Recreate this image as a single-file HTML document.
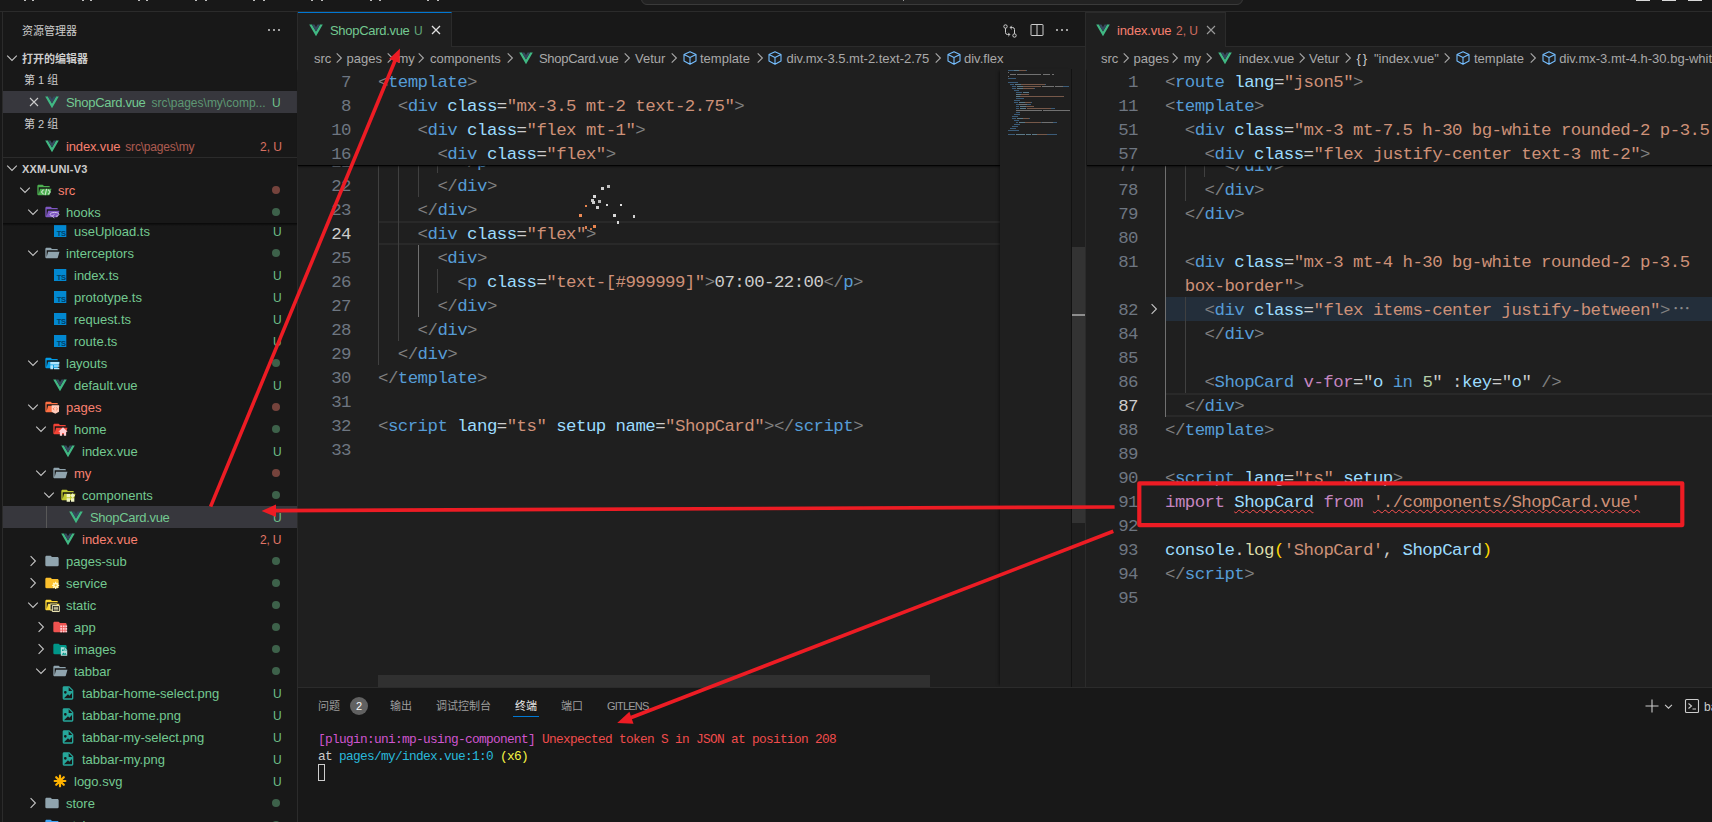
<!DOCTYPE html>
<html lang="zh-CN"><head><meta charset="utf-8"><title>VS Code</title><style>
*{box-sizing:border-box;margin:0;padding:0}
html,body{width:1712px;height:822px;overflow:hidden;background:#181818}
body{position:relative;font-family:"Liberation Sans","Noto Sans CJK SC",sans-serif;font-size:13px;color:#cccccc;-webkit-font-smoothing:antialiased}
.abs{position:absolute}
.t{position:absolute;white-space:pre;line-height:22px;height:22px;margin-top:1px}
.row{position:absolute;left:3px;width:294px;height:22px}
.code{position:absolute;white-space:pre;font-family:"Liberation Mono","Noto Sans CJK SC",monospace;font-size:17.4px;line-height:24px;height:24px;color:#cccccc;letter-spacing:-.54px;margin-top:2px}
.ln{position:absolute;font-family:"Liberation Mono","Noto Sans CJK SC",monospace;font-size:17.4px;letter-spacing:-.54px;line-height:24px;height:24px;text-align:right;color:#6e7681;width:60px;margin-top:2px}
.ln.act{color:#cccccc}
.b{color:#808080}.tg{color:#569cd6}.at{color:#9cdcfe}.s{color:#ce9178}.k{color:#c586c0}.c{color:#4ec9b0}.y{color:#ffd700}.f{color:#dcdcaa}.n{color:#b5cea8}.w{color:#cccccc}
.guide{position:absolute;width:1px;background:#404040}
.bc{position:absolute;top:48px;height:22px;line-height:22px;white-space:pre;font-size:13px;color:#a9a9a9}
.term{position:absolute;white-space:pre;font-family:"Liberation Mono","Noto Sans CJK SC",monospace;font-size:12.8px;letter-spacing:-.68px;line-height:17px;height:17px;color:#cccccc;margin-top:1px}
.ptab{position:absolute;top:695px;height:22px;line-height:22px;font-size:11px;color:#9d9d9d;white-space:pre}

.sq{text-decoration:underline wavy #ff5252;text-decoration-thickness:1px;text-underline-offset:2.2px;text-decoration-skip-ink:none}
</style></head><body>
<div class="abs" style="left:0;top:0;width:1712px;height:12px;background:#181818;border-bottom:1px solid #2b2b2b"></div>
<div class="abs" style="left:641px;top:-20px;width:602px;height:25px;border:1px solid #3a3a3a;border-radius:6px;background:#222222"></div>
<div class="abs" style="left:24px;top:0;width:2px;height:1px;background:#bdbdbd"></div>
<div class="abs" style="left:32px;top:0;width:2px;height:1px;background:#bdbdbd"></div>
<div class="abs" style="left:82px;top:0;width:2px;height:1px;background:#bdbdbd"></div>
<div class="abs" style="left:90px;top:0;width:2px;height:1px;background:#bdbdbd"></div>
<div class="abs" style="left:138px;top:0;width:2px;height:1px;background:#bdbdbd"></div>
<div class="abs" style="left:146px;top:0;width:2px;height:1px;background:#bdbdbd"></div>
<div class="abs" style="left:195px;top:0;width:2px;height:1px;background:#bdbdbd"></div>
<div class="abs" style="left:205px;top:0;width:2px;height:1px;background:#bdbdbd"></div>
<div class="abs" style="left:253px;top:0;width:2px;height:1px;background:#bdbdbd"></div>
<div class="abs" style="left:263px;top:0;width:2px;height:1px;background:#bdbdbd"></div>
<div class="abs" style="left:311px;top:0;width:2px;height:1px;background:#bdbdbd"></div>
<div class="abs" style="left:321px;top:0;width:2px;height:1px;background:#bdbdbd"></div>
<div class="abs" style="left:370px;top:0;width:2px;height:1px;background:#bdbdbd"></div>
<div class="abs" style="left:379px;top:0;width:2px;height:1px;background:#bdbdbd"></div>
<div class="abs" style="left:427px;top:0;width:2px;height:1px;background:#bdbdbd"></div>
<div class="abs" style="left:437px;top:0;width:2px;height:1px;background:#bdbdbd"></div>
<div class="abs" style="left:903px;top:0;width:1px;height:1px;background:#999"></div>
<div class="abs" style="left:1636px;top:0;width:14px;height:1px;background:#d8d8d8"></div>
<div class="abs" style="left:1662px;top:0;width:14px;height:1px;background:#d8d8d8"></div>
<div class="abs" style="left:1688px;top:0;width:14px;height:1px;background:#d8d8d8"></div>
<div class="abs" style="left:0;top:12px;width:298px;height:810px;background:#181818;border-left:1px solid #2b2b2b;border-right:1px solid #2b2b2b;margin-left:2px;width:296px"></div>
<div class="t" style="left:22px;top:19px;font-size:11px;color:#cccccc">资源管理器</div>
<div class="abs" style="left:268px;top:29px;width:2px;height:2px;background:#ccc;box-shadow:5px 0 #ccc,10px 0 #ccc;border-radius:1px"></div>
<svg class="abs" style="left:4px;top:50px" width="16" height="16" viewBox="0 0 16 16"><path d="M3.200 5.600 8 10.400l4.800-4.800" fill="none" stroke="#c5c5c5" stroke-width="1.100"/></svg>
<div class="t" style="left:22px;top:47px;font-size:11px;font-weight:700;color:#cccccc">打开的编辑器</div>
<div class="t" style="left:24px;top:69px;margin-top:0;font-size:11px;color:#cccccc">第 1 组</div>
<div class="abs" style="left:3px;top:91px;width:294px;height:22px;background:#37373d"></div>
<svg class="abs" style="left:26px;top:94px" width="16" height="16" viewBox="0 0 16 16"><path d="M4 4l8 8M12 4l-8 8" stroke="#cccccc" stroke-width="1.100" fill="none"/></svg>
<svg class="abs" style="left:44px;top:94px" width="16" height="16" viewBox="0 0 24 24"><path d="M1.800 3.700 12 21.300 22.200 3.700h-4.100L12 14.300 5.800 3.700z" fill="#41b883"/><path d="M5.800 3.700 12 14.300l6.100-10.600h-3.700L12 7.800 9.600 3.700z" fill="#35495e"/></svg>
<div class="t" style="left:66px;top:91px;color:#73c991"><span style="letter-spacing:-.3px">ShopCard.vue</span><span style="font-size:12px;opacity:.65;margin-left:6px">src\pages\my\comp...</span></div>
<div class="t" style="left:272px;top:91px;color:#73c991;font-size:12px;opacity:.95">U</div>
<div class="t" style="left:24px;top:113px;margin-top:0;font-size:11px;color:#cccccc">第 2 组</div>
<svg class="abs" style="left:44px;top:138px" width="16" height="16" viewBox="0 0 24 24"><path d="M1.800 3.700 12 21.300 22.200 3.700h-4.100L12 14.300 5.800 3.700z" fill="#41b883"/><path d="M5.800 3.700 12 14.300l6.100-10.600h-3.700L12 7.800 9.600 3.700z" fill="#35495e"/></svg>
<div class="t" style="left:66px;top:135px;color:#f88070"><span style="letter-spacing:-.15px">index.vue</span><span style="font-size:12px;opacity:.65;margin-left:5px;letter-spacing:-.2px">src\pages\my</span></div>
<div class="t" style="left:260px;top:135px;color:#f88070;font-size:12px;opacity:.85">2, U</div>
<div class="abs" style="left:3px;top:157px;width:294px;height:1px;background:#2b2b2b"></div>
<svg class="abs" style="left:4px;top:160px" width="16" height="16" viewBox="0 0 16 16"><path d="M3.200 5.600 8 10.400l4.800-4.800" fill="none" stroke="#c5c5c5" stroke-width="1.100"/></svg>
<div class="t" style="left:22px;top:157px;font-size:11px;font-weight:700;letter-spacing:.2px;color:#cccccc">XXM-UNI-V3</div>
<div class="abs" style="left:0;top:223px;width:297px;height:599px;overflow:hidden"><div class="abs" style="left:0;top:-223px;width:297px;height:822px">
<svg class="abs" style="left:52px;top:223px" width="16" height="16" viewBox="0 0 16 16"><rect x="2" y="2" width="12.300" height="12" fill="#0288d1"/><text x="13.600" y="13" font-size="7.600" font-weight="700" font-family="Liberation Sans, sans-serif" fill="#013f66" text-anchor="end" letter-spacing="-.4">TS</text></svg><div class="t" style="left:74px;top:220px;color:#73c991">useUpload.ts</div><div class="t" style="left:273px;top:220px;color:#73c991;font-size:12px;opacity:.95">U</div>
<svg class="abs" style="left:25px;top:245px" width="16" height="16" viewBox="0 0 16 16"><path d="M3.200 5.600 8 10.400l4.800-4.800" fill="none" stroke="#c5c5c5" stroke-width="1.100"/></svg><svg class="abs" style="left:44px;top:245px" width="16" height="16" viewBox="0 0 24 24"><path d="M19 20H4c-1.100 0-2-.9-2-2V6c0-1.100.9-2 2-2h6l2 2h7a2 2 0 0 1 2 2H4v10l2.100-8h17.100l-2.300 8.500c-.2.900-1 1.500-1.900 1.500z" fill="#90a4ae"/></svg><div class="t" style="left:66px;top:242px;color:#73c991">interceptors</div><div class="abs" style="left:272px;top:249px;width:8px;height:8px;border-radius:4px;background:#73c991;opacity:.42"></div>
<svg class="abs" style="left:52px;top:267px" width="16" height="16" viewBox="0 0 16 16"><rect x="2" y="2" width="12.300" height="12" fill="#0288d1"/><text x="13.600" y="13" font-size="7.600" font-weight="700" font-family="Liberation Sans, sans-serif" fill="#013f66" text-anchor="end" letter-spacing="-.4">TS</text></svg><div class="t" style="left:74px;top:264px;color:#73c991">index.ts</div><div class="t" style="left:273px;top:264px;color:#73c991;font-size:12px;opacity:.95">U</div>
<svg class="abs" style="left:52px;top:289px" width="16" height="16" viewBox="0 0 16 16"><rect x="2" y="2" width="12.300" height="12" fill="#0288d1"/><text x="13.600" y="13" font-size="7.600" font-weight="700" font-family="Liberation Sans, sans-serif" fill="#013f66" text-anchor="end" letter-spacing="-.4">TS</text></svg><div class="t" style="left:74px;top:286px;color:#73c991">prototype.ts</div><div class="t" style="left:273px;top:286px;color:#73c991;font-size:12px;opacity:.95">U</div>
<svg class="abs" style="left:52px;top:311px" width="16" height="16" viewBox="0 0 16 16"><rect x="2" y="2" width="12.300" height="12" fill="#0288d1"/><text x="13.600" y="13" font-size="7.600" font-weight="700" font-family="Liberation Sans, sans-serif" fill="#013f66" text-anchor="end" letter-spacing="-.4">TS</text></svg><div class="t" style="left:74px;top:308px;color:#73c991">request.ts</div><div class="t" style="left:273px;top:308px;color:#73c991;font-size:12px;opacity:.95">U</div>
<svg class="abs" style="left:52px;top:333px" width="16" height="16" viewBox="0 0 16 16"><rect x="2" y="2" width="12.300" height="12" fill="#0288d1"/><text x="13.600" y="13" font-size="7.600" font-weight="700" font-family="Liberation Sans, sans-serif" fill="#013f66" text-anchor="end" letter-spacing="-.4">TS</text></svg><div class="t" style="left:74px;top:330px;color:#73c991">route.ts</div><div class="t" style="left:273px;top:330px;color:#73c991;font-size:12px;opacity:.95">U</div>
<svg class="abs" style="left:25px;top:355px" width="16" height="16" viewBox="0 0 16 16"><path d="M3.200 5.600 8 10.400l4.800-4.800" fill="none" stroke="#c5c5c5" stroke-width="1.100"/></svg><svg class="abs" style="left:44px;top:355px" width="16" height="16" viewBox="0 0 24 24"><path d="M19 20H4c-1.100 0-2-.9-2-2V6c0-1.100.9-2 2-2h6l2 2h7a2 2 0 0 1 2 2H4v10l2.100-8h17.100l-2.300 8.500c-.2.900-1 1.500-1.900 1.500z" fill="#039be5"/><path d="M9.500 10.500h13.500v3.600H9.500zM9.500 15.400h4v6h-4zM14.800 15.400h8.200v2.400h-8.200zM14.800 19h8.200v2.400h-8.200z" fill="#b3e5fc"/></svg><div class="t" style="left:66px;top:352px;color:#73c991">layouts</div><div class="abs" style="left:272px;top:359px;width:8px;height:8px;border-radius:4px;background:#73c991;opacity:.42"></div>
<svg class="abs" style="left:52px;top:377px" width="16" height="16" viewBox="0 0 24 24"><path d="M1.800 3.700 12 21.300 22.200 3.700h-4.100L12 14.300 5.800 3.700z" fill="#41b883"/><path d="M5.800 3.700 12 14.300l6.100-10.600h-3.700L12 7.800 9.600 3.700z" fill="#35495e"/></svg><div class="t" style="left:74px;top:374px;color:#73c991">default.vue</div><div class="t" style="left:273px;top:374px;color:#73c991;font-size:12px;opacity:.95">U</div>
<svg class="abs" style="left:25px;top:399px" width="16" height="16" viewBox="0 0 16 16"><path d="M3.200 5.600 8 10.400l4.800-4.800" fill="none" stroke="#c5c5c5" stroke-width="1.100"/></svg><svg class="abs" style="left:44px;top:399px" width="16" height="16" viewBox="0 0 24 24"><path d="M19 20H4c-1.100 0-2-.9-2-2V6c0-1.100.9-2 2-2h6l2 2h7a2 2 0 0 1 2 2H4v10l2.100-8h17.100l-2.300 8.500c-.2.900-1 1.500-1.900 1.500z" fill="#ff7043"/><path d="M11.500 9.500h11v9.500l-5.500 3.200-5.500-3.200z" fill="#ffccbc"/><path d="M15.700 12.800l-2 2 2 2M18.300 12.800l2 2-2 2" stroke="#ff7043" stroke-width="1.300" fill="none"/></svg><div class="t" style="left:66px;top:396px;color:#f88070">pages</div><div class="abs" style="left:272px;top:403px;width:8px;height:8px;border-radius:4px;background:#f88070;opacity:.42"></div>
<svg class="abs" style="left:33px;top:421px" width="16" height="16" viewBox="0 0 16 16"><path d="M3.200 5.600 8 10.400l4.800-4.800" fill="none" stroke="#c5c5c5" stroke-width="1.100"/></svg><svg class="abs" style="left:52px;top:421px" width="16" height="16" viewBox="0 0 24 24"><path d="M19 20H4c-1.100 0-2-.9-2-2V6c0-1.100.9-2 2-2h6l2 2h7a2 2 0 0 1 2 2H4v10l2.100-8h17.100l-2.300 8.500c-.2.900-1 1.500-1.900 1.500z" fill="#f44336"/><path d="M16.500 9.500 9.500 16h2.300v6h3.400v-4h2.600v4h3.400v-6h2.300z" fill="#ffcdd2"/></svg><div class="t" style="left:74px;top:418px;color:#73c991">home</div><div class="abs" style="left:272px;top:425px;width:8px;height:8px;border-radius:4px;background:#73c991;opacity:.42"></div>
<svg class="abs" style="left:60px;top:443px" width="16" height="16" viewBox="0 0 24 24"><path d="M1.800 3.700 12 21.300 22.200 3.700h-4.100L12 14.300 5.800 3.700z" fill="#41b883"/><path d="M5.800 3.700 12 14.300l6.100-10.600h-3.700L12 7.800 9.600 3.700z" fill="#35495e"/></svg><div class="t" style="left:82px;top:440px;color:#73c991">index.vue</div><div class="t" style="left:273px;top:440px;color:#73c991;font-size:12px;opacity:.95">U</div>
<svg class="abs" style="left:33px;top:465px" width="16" height="16" viewBox="0 0 16 16"><path d="M3.200 5.600 8 10.400l4.800-4.800" fill="none" stroke="#c5c5c5" stroke-width="1.100"/></svg><svg class="abs" style="left:52px;top:465px" width="16" height="16" viewBox="0 0 24 24"><path d="M19 20H4c-1.100 0-2-.9-2-2V6c0-1.100.9-2 2-2h6l2 2h7a2 2 0 0 1 2 2H4v10l2.100-8h17.100l-2.300 8.500c-.2.900-1 1.500-1.900 1.500z" fill="#90a4ae"/></svg><div class="t" style="left:74px;top:462px;color:#f88070">my</div><div class="abs" style="left:272px;top:469px;width:8px;height:8px;border-radius:4px;background:#f88070;opacity:.42"></div>
<svg class="abs" style="left:41px;top:487px" width="16" height="16" viewBox="0 0 16 16"><path d="M3.200 5.600 8 10.400l4.800-4.800" fill="none" stroke="#c5c5c5" stroke-width="1.100"/></svg><svg class="abs" style="left:60px;top:487px" width="16" height="16" viewBox="0 0 24 24"><path d="M19 20H4c-1.100 0-2-.9-2-2V6c0-1.100.9-2 2-2h6l2 2h7a2 2 0 0 1 2 2H4v10l2.100-8h17.100l-2.300 8.500c-.2.900-1 1.500-1.900 1.500z" fill="#c0ca33"/><path d="M10 10.500h5v5h-5zM10 17h5v5h-5zM16.500 17h5v5h-5z" fill="#f0f4c3"/><path d="M19 9.200l3.600 3.600-3.600 3.600-3.600-3.600z" fill="#f0f4c3"/></svg><div class="t" style="left:82px;top:484px;color:#73c991">components</div><div class="abs" style="left:272px;top:491px;width:8px;height:8px;border-radius:4px;background:#73c991;opacity:.42"></div>
<div class="abs" style="left:3px;top:506px;width:294px;height:22px;background:#37373d"></div>
<div class="abs" style="left:46px;top:506px;width:1px;height:22px;background:#585858"></div>
<svg class="abs" style="left:68px;top:509px" width="16" height="16" viewBox="0 0 24 24"><path d="M1.800 3.700 12 21.300 22.200 3.700h-4.100L12 14.300 5.800 3.700z" fill="#41b883"/><path d="M5.800 3.700 12 14.300l6.100-10.600h-3.700L12 7.800 9.600 3.700z" fill="#35495e"/></svg><div class="t" style="left:90px;top:506px;color:#73c991;letter-spacing:-.3px">ShopCard.vue</div><div class="t" style="left:273px;top:506px;color:#73c991;font-size:12px;opacity:.95">U</div>
<svg class="abs" style="left:60px;top:531px" width="16" height="16" viewBox="0 0 24 24"><path d="M1.800 3.700 12 21.300 22.200 3.700h-4.100L12 14.300 5.800 3.700z" fill="#41b883"/><path d="M5.800 3.700 12 14.300l6.100-10.600h-3.700L12 7.800 9.600 3.700z" fill="#35495e"/></svg><div class="t" style="left:82px;top:528px;color:#f88070">index.vue</div><div class="t" style="left:260px;top:528px;color:#f88070;font-size:12px;opacity:.9;letter-spacing:-.2px">2, U</div>
<svg class="abs" style="left:25px;top:553px" width="16" height="16" viewBox="0 0 16 16"><path d="M5.600 3.200 10.400 8l-4.800 4.800" fill="none" stroke="#c5c5c5" stroke-width="1.100"/></svg><svg class="abs" style="left:44px;top:553px" width="16" height="16" viewBox="0 0 24 24"><path d="M10 4H4c-1.100 0-2 .9-2 2v12a2 2 0 0 0 2 2h16a2 2 0 0 0 2-2V8c0-1.100-.9-2-2-2h-8l-2-2z" fill="#90a4ae"/></svg><div class="t" style="left:66px;top:550px;color:#73c991">pages-sub</div><div class="abs" style="left:272px;top:557px;width:8px;height:8px;border-radius:4px;background:#73c991;opacity:.42"></div>
<svg class="abs" style="left:25px;top:575px" width="16" height="16" viewBox="0 0 16 16"><path d="M5.600 3.200 10.400 8l-4.800 4.800" fill="none" stroke="#c5c5c5" stroke-width="1.100"/></svg><svg class="abs" style="left:44px;top:575px" width="16" height="16" viewBox="0 0 24 24"><path d="M10 4H4c-1.100 0-2 .9-2 2v12a2 2 0 0 0 2 2h16a2 2 0 0 0 2-2V8c0-1.100-.9-2-2-2h-8l-2-2z" fill="#fbc02d"/><path d="M22.82 14.57L22.82 16.43L21.31 16.35L20.79 17.59L21.92 18.61L20.61 19.92L19.59 18.79L18.35 19.31L18.43 20.82L16.57 20.82L16.65 19.31L15.41 18.79L14.39 19.92L13.08 18.61L14.21 17.59L13.69 16.35L12.18 16.43L12.18 14.57L13.69 14.65L14.21 13.41L13.08 12.39L14.39 11.08L15.41 12.21L16.65 11.69L16.57 10.18L18.43 10.18L18.35 11.69L19.59 12.21L20.61 11.08L21.92 12.39L20.79 13.41L21.31 14.65z" fill="#fff9c4"/><circle cx="17.500" cy="15.500" r="1.700" fill="#fbc02d"/></svg><div class="t" style="left:66px;top:572px;color:#73c991">service</div><div class="abs" style="left:272px;top:579px;width:8px;height:8px;border-radius:4px;background:#73c991;opacity:.42"></div>
<svg class="abs" style="left:25px;top:597px" width="16" height="16" viewBox="0 0 16 16"><path d="M3.200 5.600 8 10.400l4.800-4.800" fill="none" stroke="#c5c5c5" stroke-width="1.100"/></svg><svg class="abs" style="left:44px;top:597px" width="16" height="16" viewBox="0 0 24 24"><path d="M19 20H4c-1.100 0-2-.9-2-2V6c0-1.100.9-2 2-2h6l2 2h7a2 2 0 0 1 2 2H4v10l2.100-8h17.100l-2.300 8.500c-.2.900-1 1.500-1.900 1.500z" fill="#fdd835"/><path d="M9.200 10.500h10.500v9H9.200z" fill="#181818" stroke="#fff59d" stroke-width="1.300"/><path d="M12.500 12.800h10.500v9H12.500z" fill="#181818" stroke="#fff9c4" stroke-width="1.400"/><path d="M14.500 15.400h6.500M14.500 17.400h6.500M14.500 19.400h6.500" stroke="#fff9c4" stroke-width="1.200"/></svg><div class="t" style="left:66px;top:594px;color:#73c991">static</div><div class="abs" style="left:272px;top:601px;width:8px;height:8px;border-radius:4px;background:#73c991;opacity:.42"></div>
<svg class="abs" style="left:33px;top:619px" width="16" height="16" viewBox="0 0 16 16"><path d="M5.600 3.200 10.400 8l-4.800 4.800" fill="none" stroke="#c5c5c5" stroke-width="1.100"/></svg><svg class="abs" style="left:52px;top:619px" width="16" height="16" viewBox="0 0 24 24"><path d="M10 4H4c-1.100 0-2 .9-2 2v12a2 2 0 0 0 2 2h16a2 2 0 0 0 2-2V8c0-1.100-.9-2-2-2h-8l-2-2z" fill="#ef5350"/><g fill="#ffcdd2"><rect x="12.4" y="9.7" width="2.700" height="2.700"/><rect x="12.4" y="13.5" width="2.700" height="2.700"/><rect x="12.4" y="17.3" width="2.700" height="2.700"/><rect x="16.2" y="9.7" width="2.700" height="2.700"/><rect x="16.2" y="13.5" width="2.700" height="2.700"/><rect x="16.2" y="17.3" width="2.700" height="2.700"/><rect x="20.0" y="9.7" width="2.700" height="2.700"/><rect x="20.0" y="13.5" width="2.700" height="2.700"/><rect x="20.0" y="17.3" width="2.700" height="2.700"/></g></svg><div class="t" style="left:74px;top:616px;color:#73c991">app</div><div class="abs" style="left:272px;top:623px;width:8px;height:8px;border-radius:4px;background:#73c991;opacity:.42"></div>
<svg class="abs" style="left:33px;top:641px" width="16" height="16" viewBox="0 0 16 16"><path d="M5.600 3.200 10.400 8l-4.800 4.800" fill="none" stroke="#c5c5c5" stroke-width="1.100"/></svg><svg class="abs" style="left:52px;top:641px" width="16" height="16" viewBox="0 0 24 24"><path d="M10 4H4c-1.100 0-2 .9-2 2v12a2 2 0 0 0 2 2h16a2 2 0 0 0 2-2V8c0-1.100-.9-2-2-2h-8l-2-2z" fill="#009688"/><path d="M13.200 9.500h5.600l4 4v8.700h-9.600z" fill="#b2dfdb"/><path d="M14.500 20.500l2.700-3.400 1.600 2 1.200-1.300 2 2.700z" fill="#009688"/><circle cx="16.300" cy="13.800" r="1.300" fill="#009688"/><path d="M18.600 9.700v4.100h4" fill="none" stroke="#009688" stroke-width=".9"/></svg><div class="t" style="left:74px;top:638px;color:#73c991">images</div><div class="abs" style="left:272px;top:645px;width:8px;height:8px;border-radius:4px;background:#73c991;opacity:.42"></div>
<svg class="abs" style="left:33px;top:663px" width="16" height="16" viewBox="0 0 16 16"><path d="M3.200 5.600 8 10.400l4.800-4.800" fill="none" stroke="#c5c5c5" stroke-width="1.100"/></svg><svg class="abs" style="left:52px;top:663px" width="16" height="16" viewBox="0 0 24 24"><path d="M19 20H4c-1.100 0-2-.9-2-2V6c0-1.100.9-2 2-2h6l2 2h7a2 2 0 0 1 2 2H4v10l2.100-8h17.100l-2.300 8.500c-.2.900-1 1.500-1.900 1.500z" fill="#90a4ae"/></svg><div class="t" style="left:74px;top:660px;color:#73c991">tabbar</div><div class="abs" style="left:272px;top:667px;width:8px;height:8px;border-radius:4px;background:#73c991;opacity:.42"></div>
<svg class="abs" style="left:60px;top:685px" width="16" height="16" viewBox="0 0 24 24"><path d="M13 9h5.500L13 3.500V9M6 2h8l6 6v12a2 2 0 0 1-2 2H6a2 2 0 0 1-2-2V4c0-1.100.9-2 2-2m0 18h12v-8l-4 4-2-2-6 6M8 9a2 2 0 0 0-2 2 2 2 0 0 0 2 2 2 2 0 0 0 2-2 2 2 0 0 0-2-2z" fill="#26a69a"/></svg><div class="t" style="left:82px;top:682px;color:#73c991">tabbar-home-select.png</div><div class="t" style="left:273px;top:682px;color:#73c991;font-size:12px;opacity:.95">U</div>
<svg class="abs" style="left:60px;top:707px" width="16" height="16" viewBox="0 0 24 24"><path d="M13 9h5.500L13 3.500V9M6 2h8l6 6v12a2 2 0 0 1-2 2H6a2 2 0 0 1-2-2V4c0-1.100.9-2 2-2m0 18h12v-8l-4 4-2-2-6 6M8 9a2 2 0 0 0-2 2 2 2 0 0 0 2 2 2 2 0 0 0 2-2 2 2 0 0 0-2-2z" fill="#26a69a"/></svg><div class="t" style="left:82px;top:704px;color:#73c991">tabbar-home.png</div><div class="t" style="left:273px;top:704px;color:#73c991;font-size:12px;opacity:.95">U</div>
<svg class="abs" style="left:60px;top:729px" width="16" height="16" viewBox="0 0 24 24"><path d="M13 9h5.500L13 3.500V9M6 2h8l6 6v12a2 2 0 0 1-2 2H6a2 2 0 0 1-2-2V4c0-1.100.9-2 2-2m0 18h12v-8l-4 4-2-2-6 6M8 9a2 2 0 0 0-2 2 2 2 0 0 0 2 2 2 2 0 0 0 2-2 2 2 0 0 0-2-2z" fill="#26a69a"/></svg><div class="t" style="left:82px;top:726px;color:#73c991">tabbar-my-select.png</div><div class="t" style="left:273px;top:726px;color:#73c991;font-size:12px;opacity:.95">U</div>
<svg class="abs" style="left:60px;top:751px" width="16" height="16" viewBox="0 0 24 24"><path d="M13 9h5.500L13 3.500V9M6 2h8l6 6v12a2 2 0 0 1-2 2H6a2 2 0 0 1-2-2V4c0-1.100.9-2 2-2m0 18h12v-8l-4 4-2-2-6 6M8 9a2 2 0 0 0-2 2 2 2 0 0 0 2 2 2 2 0 0 0 2-2 2 2 0 0 0-2-2z" fill="#26a69a"/></svg><div class="t" style="left:82px;top:748px;color:#73c991">tabbar-my.png</div><div class="t" style="left:273px;top:748px;color:#73c991;font-size:12px;opacity:.95">U</div>
<svg class="abs" style="left:52px;top:773px" width="16" height="16" viewBox="0 0 24 24"><g stroke="#ffb300" stroke-width="3.300" stroke-linecap="round"><path d="M12 4v16M4 12h16M6.300 6.300l11.400 11.400M17.700 6.300 6.300 17.700"/></g></svg><div class="t" style="left:74px;top:770px;color:#73c991">logo.svg</div><div class="t" style="left:273px;top:770px;color:#73c991;font-size:12px;opacity:.95">U</div>
<svg class="abs" style="left:25px;top:795px" width="16" height="16" viewBox="0 0 16 16"><path d="M5.600 3.200 10.400 8l-4.800 4.800" fill="none" stroke="#c5c5c5" stroke-width="1.100"/></svg><svg class="abs" style="left:44px;top:795px" width="16" height="16" viewBox="0 0 24 24"><path d="M10 4H4c-1.100 0-2 .9-2 2v12a2 2 0 0 0 2 2h16a2 2 0 0 0 2-2V8c0-1.100-.9-2-2-2h-8l-2-2z" fill="#90a4ae"/></svg><div class="t" style="left:66px;top:792px;color:#73c991">store</div><div class="abs" style="left:272px;top:799px;width:8px;height:8px;border-radius:4px;background:#73c991;opacity:.42"></div>
<svg class="abs" style="left:25px;top:817px" width="16" height="16" viewBox="0 0 16 16"><path d="M3.200 5.600 8 10.400l4.800-4.800" fill="none" stroke="#c5c5c5" stroke-width="1.100"/></svg><svg class="abs" style="left:44px;top:817px" width="16" height="16" viewBox="0 0 24 24"><path d="M10 4H4c-1.100 0-2 .9-2 2v12a2 2 0 0 0 2 2h16a2 2 0 0 0 2-2V8c0-1.100-.9-2-2-2h-8l-2-2z" fill="#42a5f5"/></svg><div class="t" style="left:66px;top:814px;color:#73c991">style</div><div class="abs" style="left:272px;top:821px;width:8px;height:8px;border-radius:4px;background:#73c991;opacity:.42"></div>
</div></div>
<svg class="abs" style="left:17px;top:182px" width="16" height="16" viewBox="0 0 16 16"><path d="M3.200 5.600 8 10.400l4.800-4.800" fill="none" stroke="#c5c5c5" stroke-width="1.100"/></svg><svg class="abs" style="left:36px;top:182px" width="16" height="16" viewBox="0 0 24 24"><path d="M19 20H4c-1.100 0-2-.9-2-2V6c0-1.100.9-2 2-2h6l2 2h7a2 2 0 0 1 2 2H4v10l2.100-8h17.100l-2.300 8.500c-.2.900-1 1.500-1.900 1.500z" fill="#4caf50"/><path d="M11.300 11.500 8.300 15l3 3.500M18.200 11.500l3 3.500-3 3.500M15.900 10.300l-2.300 9.400" stroke="#c8e6c9" stroke-width="1.700" fill="none"/></svg><div class="t" style="left:58px;top:179px;color:#f88070">src</div><div class="abs" style="left:272px;top:186px;width:8px;height:8px;border-radius:4px;background:#f88070;opacity:.42"></div>
<svg class="abs" style="left:25px;top:204px" width="16" height="16" viewBox="0 0 16 16"><path d="M3.200 5.600 8 10.400l4.800-4.800" fill="none" stroke="#c5c5c5" stroke-width="1.100"/></svg><svg class="abs" style="left:44px;top:204px" width="16" height="16" viewBox="0 0 24 24"><path d="M19 20H4c-1.100 0-2-.9-2-2V6c0-1.100.9-2 2-2h6l2 2h7a2 2 0 0 1 2 2H4v10l2.100-8h17.100l-2.300 8.500c-.2.900-1 1.500-1.900 1.500z" fill="#7e57c2"/><path d="M13 18.300c-2.600-.4-3.800-1.500-3.800-2.700 0-1.700 2.900-3 6.600-3s6.600 1.300 6.600 3c0 1.300-1.900 2.500-4.600 2.900" stroke="#d1c4e9" stroke-width="1.500" fill="none"/><path d="M15.300 15.600 12.600 18.300l2.800 2.500" stroke="#d1c4e9" stroke-width="1.500" fill="none"/></svg><div class="t" style="left:66px;top:201px;color:#73c991">hooks</div><div class="abs" style="left:272px;top:208px;width:8px;height:8px;border-radius:4px;background:#73c991;opacity:.42"></div>
<div class="abs" style="left:3px;top:223px;width:294px;height:3px;background:linear-gradient(#000000aa,#00000000)"></div>
<div class="abs" style="left:298px;top:12px;width:788px;height:35px;background:#181818;border-bottom:1px solid #2b2b2b"></div>
<div class="abs" style="left:298px;top:47px;width:788px;height:640px;background:#1f1f1f"></div>
<div class="abs" style="left:1085px;top:12px;width:1px;height:675px;background:#2b2b2b"></div>
<div class="abs" style="left:1086px;top:12px;width:626px;height:35px;background:#181818;border-bottom:1px solid #2b2b2b"></div>
<div class="abs" style="left:1086px;top:47px;width:626px;height:640px;background:#1f1f1f"></div>
<div class="abs" style="left:298px;top:12px;width:154px;height:35px;background:#1f1f1f;border-top:1px solid #0078d4;border-right:1px solid #2b2b2b"></div>
<svg class="abs" style="left:308px;top:22px" width="16" height="16" viewBox="0 0 24 24"><path d="M1.800 3.700 12 21.300 22.200 3.700h-4.100L12 14.300 5.800 3.700z" fill="#41b883"/><path d="M5.800 3.700 12 14.300l6.100-10.600h-3.700L12 7.800 9.600 3.700z" fill="#35495e"/></svg>
<div class="t" style="left:330px;top:19px;color:#73c991;letter-spacing:-.3px">ShopCard.vue</div>
<div class="t" style="left:414px;top:19px;color:#73c991;font-size:12px;opacity:.8">U</div>
<svg class="abs" style="left:428px;top:22px" width="16" height="16" viewBox="0 0 16 16"><path d="M4 4l8 8M12 4l-8 8" stroke="#e0e0e0" stroke-width="1.300" fill="none"/></svg>
<svg class="abs" style="left:1002px;top:22.5px" width="16" height="16" viewBox="0 0 16 16" fill="none" stroke="#cccccc" stroke-width="1"><circle cx="3.500" cy="3.500" r="1.700"/><circle cx="12.500" cy="12.500" r="1.700"/><path d="M3.500 5.200v4.300a2 2 0 0 0 2 2h2.200M6.200 9.800l1.700 1.700-1.700 1.700M12.500 10.800V6.500a2 2 0 0 0-2-2H8.300M9.800 6.200 8.100 4.500l1.700-1.700"/></svg>
<svg class="abs" style="left:1029px;top:22px" width="16" height="16" viewBox="0 0 16 16" fill="none" stroke="#cccccc" stroke-width="1"><rect x="2" y="2.500" width="12" height="11" rx=".5"/><path d="M8 2.500v11"/></svg>
<div class="abs" style="left:1056px;top:29px;width:2px;height:2px;background:#ccc;box-shadow:5px 0 #ccc,10px 0 #ccc;border-radius:1px"></div>
<div class="bc" style="left:314px;">src</div>
<svg class="abs" style="left:330.5px;top:50px" width="16" height="16" viewBox="0 0 16 16"><path d="M5.700 3.300 10.400 8l-4.700 4.700" fill="none" stroke="#a9a9a9" stroke-width="1.100"/></svg>
<div class="bc" style="left:346.5px;">pages</div>
<svg class="abs" style="left:381.5px;top:50px" width="16" height="16" viewBox="0 0 16 16"><path d="M5.700 3.300 10.400 8l-4.700 4.700" fill="none" stroke="#a9a9a9" stroke-width="1.100"/></svg>
<div class="bc" style="left:397.5px;">my</div>
<svg class="abs" style="left:413px;top:50px" width="16" height="16" viewBox="0 0 16 16"><path d="M5.700 3.300 10.400 8l-4.700 4.700" fill="none" stroke="#a9a9a9" stroke-width="1.100"/></svg>
<div class="bc" style="left:430px;">components</div>
<svg class="abs" style="left:501.5px;top:50px" width="16" height="16" viewBox="0 0 16 16"><path d="M5.700 3.300 10.400 8l-4.700 4.700" fill="none" stroke="#a9a9a9" stroke-width="1.100"/></svg>
<svg class="abs" style="left:518px;top:50px" width="16" height="16" viewBox="0 0 24 24"><path d="M1.800 3.700 12 21.300 22.200 3.700h-4.100L12 14.300 5.800 3.700z" fill="#41b883"/><path d="M5.800 3.700 12 14.300l6.100-10.600h-3.700L12 7.800 9.600 3.700z" fill="#35495e"/></svg>
<div class="bc" style="left:539px;letter-spacing:-.3px">ShopCard.vue</div>
<svg class="abs" style="left:618.5px;top:50px" width="16" height="16" viewBox="0 0 16 16"><path d="M5.700 3.300 10.400 8l-4.700 4.700" fill="none" stroke="#a9a9a9" stroke-width="1.100"/></svg>
<div class="bc" style="left:635px;">Vetur</div>
<svg class="abs" style="left:665.5px;top:50px" width="16" height="16" viewBox="0 0 16 16"><path d="M5.700 3.300 10.400 8l-4.700 4.700" fill="none" stroke="#a9a9a9" stroke-width="1.100"/></svg>
<svg class="abs" style="left:681.5px;top:50px" width="16" height="16" viewBox="0 0 16 16" fill="none" stroke="#75beff" stroke-width="1.100" stroke-linejoin="round"><path d="M8 1.800 14 4.500v6.600L8 14.200 2 11.100V4.500zM2 4.500l6 2.900 6-2.900M8 7.400v6.800"/></svg>
<div class="bc" style="left:700px;">template</div>
<svg class="abs" style="left:752px;top:50px" width="16" height="16" viewBox="0 0 16 16"><path d="M5.700 3.300 10.400 8l-4.700 4.700" fill="none" stroke="#a9a9a9" stroke-width="1.100"/></svg>
<svg class="abs" style="left:767px;top:50px" width="16" height="16" viewBox="0 0 16 16" fill="none" stroke="#75beff" stroke-width="1.100" stroke-linejoin="round"><path d="M8 1.800 14 4.500v6.600L8 14.200 2 11.100V4.500zM2 4.500l6 2.900 6-2.900M8 7.400v6.800"/></svg>
<div class="bc" style="left:786.5px;">div.mx-3.5.mt-2.text-2.75</div>
<svg class="abs" style="left:929.5px;top:50px" width="16" height="16" viewBox="0 0 16 16"><path d="M5.700 3.300 10.400 8l-4.700 4.700" fill="none" stroke="#a9a9a9" stroke-width="1.100"/></svg>
<svg class="abs" style="left:945.5px;top:50px" width="16" height="16" viewBox="0 0 16 16" fill="none" stroke="#75beff" stroke-width="1.100" stroke-linejoin="round"><path d="M8 1.800 14 4.500v6.600L8 14.200 2 11.100V4.500zM2 4.500l6 2.900 6-2.900M8 7.400v6.800"/></svg>
<div class="bc" style="left:964px;">div.flex</div>
<div class="abs" style="left:298px;top:165px;width:788px;height:510px;overflow:hidden"><div class="abs" style="left:-298px;top:-165px;width:1712px;height:822px">
<div class="abs" style="left:378px;top:221px;width:622px;height:24px;border-top:2px solid #292929;border-bottom:2px solid #292929"></div>
<div class="guide" style="left:378px;top:149px;height:216px;background:#404040"></div>
<div class="guide" style="left:398px;top:149px;height:192px;background:#404040"></div>
<div class="guide" style="left:418px;top:149px;height:48px;background:#404040"></div>
<div class="guide" style="left:437px;top:149px;height:24px;background:#404040"></div>
<div class="guide" style="left:418px;top:245px;height:72px;background:#707070"></div>
<div class="guide" style="left:437px;top:269px;height:24px;background:#404040"></div>
<div class="ln" style="left:291px;top:149px">21</div>
<div class="code" style="left:457.2px;top:149px"><span class="b">&lt;/</span><span class="tg">p</span><span class="b">&gt;</span></div>
<div class="ln" style="left:291px;top:173px">22</div>
<div class="code" style="left:437.4px;top:173px"><span class="b">&lt;/</span><span class="tg">div</span><span class="b">&gt;</span></div>
<div class="ln" style="left:291px;top:197px">23</div>
<div class="code" style="left:417.6px;top:197px"><span class="b">&lt;/</span><span class="tg">div</span><span class="b">&gt;</span></div>
<div class="ln act" style="left:291px;top:221px">24</div>
<div class="code" style="left:417.6px;top:221px"><span class="b">&lt;</span><span class="tg">div</span> <span class="at">class</span><span class="w">=</span><span class="s">&quot;flex&quot;</span><span class="b">&gt;</span></div>
<div class="ln" style="left:291px;top:245px">25</div>
<div class="code" style="left:437.4px;top:245px"><span class="b">&lt;</span><span class="tg">div</span><span class="b">&gt;</span></div>
<div class="ln" style="left:291px;top:269px">26</div>
<div class="code" style="left:457.2px;top:269px"><span class="b">&lt;</span><span class="tg">p</span> <span class="at">class</span><span class="w">=</span><span class="s">&quot;text-[#999999]&quot;</span><span class="b">&gt;</span><span class="w">07:00-22:00</span><span class="b">&lt;/</span><span class="tg">p</span><span class="b">&gt;</span></div>
<div class="ln" style="left:291px;top:293px">27</div>
<div class="code" style="left:437.4px;top:293px"><span class="b">&lt;/</span><span class="tg">div</span><span class="b">&gt;</span></div>
<div class="ln" style="left:291px;top:317px">28</div>
<div class="code" style="left:417.6px;top:317px"><span class="b">&lt;/</span><span class="tg">div</span><span class="b">&gt;</span></div>
<div class="ln" style="left:291px;top:341px">29</div>
<div class="code" style="left:397.8px;top:341px"><span class="b">&lt;/</span><span class="tg">div</span><span class="b">&gt;</span></div>
<div class="ln" style="left:291px;top:365px">30</div>
<div class="code" style="left:378.0px;top:365px"><span class="b">&lt;/</span><span class="tg">template</span><span class="b">&gt;</span></div>
<div class="ln" style="left:291px;top:389px">31</div>
<div class="code" style="left:378.0px;top:389px"></div>
<div class="ln" style="left:291px;top:413px">32</div>
<div class="code" style="left:378.0px;top:413px"><span class="b">&lt;</span><span class="tg">script</span> <span class="at">lang</span><span class="w">=</span><span class="s">&quot;ts&quot;</span> <span class="at">setup</span> <span class="at">name</span><span class="w">=</span><span class="s">&quot;ShopCard&quot;</span><span class="b">&gt;</span><span class="b">&lt;/</span><span class="tg">script</span><span class="b">&gt;</span></div>
<div class="ln" style="left:291px;top:437px">33</div>
<div class="code" style="left:378.0px;top:437px"></div>
</div></div>
<div class="abs" style="left:298px;top:69px;width:702px;height:96px;background:#1f1f1f;box-shadow:0 1px 1px #000000d8,0 2px 2px #00000050"></div>
<div class="ln" style="left:291px;top:69px">7</div>
<div class="code" style="left:378.0px;top:69px"><span class="b">&lt;</span><span class="tg">template</span><span class="b">&gt;</span></div>
<div class="ln" style="left:291px;top:93px">8</div>
<div class="code" style="left:397.8px;top:93px"><span class="b">&lt;</span><span class="tg">div</span> <span class="at">class</span><span class="w">=</span><span class="s">&quot;mx-3.5 mt-2 text-2.75&quot;</span><span class="b">&gt;</span></div>
<div class="ln" style="left:291px;top:117px">10</div>
<div class="code" style="left:417.6px;top:117px"><span class="b">&lt;</span><span class="tg">div</span> <span class="at">class</span><span class="w">=</span><span class="s">&quot;flex mt-1&quot;</span><span class="b">&gt;</span></div>
<div class="ln" style="left:291px;top:141px">16</div>
<div class="code" style="left:437.4px;top:141px"><span class="b">&lt;</span><span class="tg">div</span> <span class="at">class</span><span class="w">=</span><span class="s">&quot;flex&quot;</span><span class="b">&gt;</span></div>
<div class="abs" style="left:601.1px;top:186.6px;width:3px;height:3px;background:#d0d0d0"></div>
<div class="abs" style="left:606.8px;top:185.2px;width:3px;height:3px;background:#c0c0c0"></div>
<div class="abs" style="left:592.9px;top:194.8px;width:3px;height:3px;background:#d8d8d8"></div>
<div class="abs" style="left:590.6px;top:199.4px;width:3px;height:3px;background:#c8c8c8"></div>
<div class="abs" style="left:591.5px;top:201.1px;width:3px;height:3px;background:#d0d0d0"></div>
<div class="abs" style="left:597.9px;top:199.9px;width:3px;height:3px;background:#b8b8b8"></div>
<div class="abs" style="left:596.0px;top:205.7px;width:3px;height:3px;background:#d0d0d0"></div>
<div class="abs" style="left:605.8px;top:203.8px;width:2px;height:2px;background:#d8d8d8"></div>
<div class="abs" style="left:619.9px;top:203.8px;width:2px;height:2px;background:#e0e0e0"></div>
<div class="abs" style="left:584.8px;top:204.8px;width:2.5px;height:2.5px;background:#e8854f"></div>
<div class="abs" style="left:578.9px;top:214.0px;width:3px;height:3px;background:#ee8a55"></div>
<div class="abs" style="left:613.1px;top:213.8px;width:3px;height:3px;background:#d8d8d8"></div>
<div class="abs" style="left:632.8px;top:215.1px;width:2.5px;height:2.5px;background:#d0d0d0"></div>
<div class="abs" style="left:616.8px;top:221.3px;width:2.5px;height:2.5px;background:#d8d8d8"></div>
<div class="abs" style="left:592.7px;top:224.9px;width:3px;height:3px;background:#e8854f"></div>
<div class="abs" style="left:584.5px;top:226.3px;width:2.5px;height:2.5px;background:#d88050"></div>
<div class="abs" style="left:590.0px;top:227.9px;width:2px;height:2px;background:#c87040"></div>
<div class="abs" style="left:1000px;top:69px;width:72px;height:618px;background:#1f1f1f;box-shadow:-3px 0 3px -2px #00000080"></div>
<div class="abs" style="left:1008px;top:70px;width:6px;height:1px;background:#4f86b6;opacity:.6"></div>
<div class="abs" style="left:1014px;top:70px;width:5px;height:1px;background:#86b8d0;opacity:.6"></div>
<div class="abs" style="left:1019px;top:70px;width:7px;height:1px;background:#b07f66;opacity:.6"></div>
<div class="abs" style="left:1026px;top:70px;width:1px;height:1px;background:#4f86b6;opacity:.6"></div>
<div class="abs" style="left:1008px;top:72px;width:1px;height:1px;background:#a8a8a8;opacity:.6"></div>
<div class="abs" style="left:1010px;top:74px;width:6px;height:1px;background:#a8a8a8;opacity:.6"></div>
<div class="abs" style="left:1017px;top:74px;width:24px;height:1px;background:#a8a8a8;opacity:.6"></div>
<div class="abs" style="left:1043px;top:74px;width:7px;height:1px;background:#a8a8a8;opacity:.6"></div>
<div class="abs" style="left:1052px;top:74px;width:2px;height:1px;background:#a8a8a8;opacity:.6"></div>
<div class="abs" style="left:1008px;top:76px;width:1px;height:1px;background:#a8a8a8;opacity:.6"></div>
<div class="abs" style="left:1008px;top:78px;width:8px;height:1px;background:#4f86b6;opacity:.6"></div>
<div class="abs" style="left:1008px;top:82px;width:10px;height:1px;background:#4f86b6;opacity:.6"></div>
<div class="abs" style="left:1010px;top:84px;width:4px;height:1px;background:#4f86b6;opacity:.6"></div>
<div class="abs" style="left:1015px;top:84px;width:6px;height:1px;background:#86b8d0;opacity:.6"></div>
<div class="abs" style="left:1021px;top:84px;width:24px;height:1px;background:#b07f66;opacity:.6"></div>
<div class="abs" style="left:1045px;top:84px;width:1px;height:1px;background:#4f86b6;opacity:.6"></div>
<div class="abs" style="left:1012px;top:86px;width:4px;height:1px;background:#4f86b6;opacity:.6"></div>
<div class="abs" style="left:1017px;top:86px;width:6px;height:1px;background:#86b8d0;opacity:.6"></div>
<div class="abs" style="left:1023px;top:86px;width:18px;height:1px;background:#b07f66;opacity:.6"></div>
<div class="abs" style="left:1042px;top:86px;width:12px;height:1px;background:#a8a8a8;opacity:.6"></div>
<div class="abs" style="left:1055px;top:86px;width:8px;height:1px;background:#a8a8a8;opacity:.6"></div>
<div class="abs" style="left:1063px;top:86px;width:6px;height:1px;background:#4f86b6;opacity:.6"></div>
<div class="abs" style="left:1012px;top:88px;width:4px;height:1px;background:#4f86b6;opacity:.6"></div>
<div class="abs" style="left:1017px;top:88px;width:6px;height:1px;background:#86b8d0;opacity:.6"></div>
<div class="abs" style="left:1023px;top:88px;width:11px;height:1px;background:#b07f66;opacity:.6"></div>
<div class="abs" style="left:1034px;top:88px;width:1px;height:1px;background:#4f86b6;opacity:.6"></div>
<div class="abs" style="left:1014px;top:90px;width:5px;height:1px;background:#4f86b6;opacity:.6"></div>
<div class="abs" style="left:1016px;top:92px;width:6px;height:1px;background:#4f86b6;opacity:.6"></div>
<div class="abs" style="left:1023px;top:92px;width:6px;height:1px;background:#86b8d0;opacity:.6"></div>
<div class="abs" style="left:1016px;top:94px;width:5px;height:1px;background:#86b8d0;opacity:.6"></div>
<div class="abs" style="left:1021px;top:94px;width:8px;height:1px;background:#b07f66;opacity:.6"></div>
<div class="abs" style="left:1016px;top:96px;width:4px;height:1px;background:#86b8d0;opacity:.6"></div>
<div class="abs" style="left:1020px;top:96px;width:44px;height:1px;background:#b07f66;opacity:.6"></div>
<div class="abs" style="left:1016px;top:98px;width:2px;height:1px;background:#4f86b6;opacity:.6"></div>
<div class="abs" style="left:1018px;top:98px;width:6px;height:1px;background:#4f86b6;opacity:.6"></div>
<div class="abs" style="left:1014px;top:100px;width:6px;height:1px;background:#4f86b6;opacity:.6"></div>
<div class="abs" style="left:1014px;top:102px;width:4px;height:1px;background:#4f86b6;opacity:.6"></div>
<div class="abs" style="left:1019px;top:102px;width:6px;height:1px;background:#86b8d0;opacity:.6"></div>
<div class="abs" style="left:1025px;top:102px;width:6px;height:1px;background:#b07f66;opacity:.6"></div>
<div class="abs" style="left:1031px;top:102px;width:1px;height:1px;background:#4f86b6;opacity:.6"></div>
<div class="abs" style="left:1016px;top:104px;width:3px;height:1px;background:#4f86b6;opacity:.6"></div>
<div class="abs" style="left:1019px;top:104px;width:8px;height:1px;background:#a8a8a8;opacity:.6"></div>
<div class="abs" style="left:1027px;top:104px;width:4px;height:1px;background:#4f86b6;opacity:.6"></div>
<div class="abs" style="left:1016px;top:106px;width:3px;height:1px;background:#4f86b6;opacity:.6"></div>
<div class="abs" style="left:1020px;top:106px;width:6px;height:1px;background:#86b8d0;opacity:.6"></div>
<div class="abs" style="left:1026px;top:106px;width:8px;height:1px;background:#b07f66;opacity:.6"></div>
<div class="abs" style="left:1016px;top:108px;width:3px;height:1px;background:#4f86b6;opacity:.6"></div>
<div class="abs" style="left:1020px;top:108px;width:6px;height:1px;background:#86b8d0;opacity:.6"></div>
<div class="abs" style="left:1027px;top:108px;width:10px;height:1px;background:#b07f66;opacity:.6"></div>
<div class="abs" style="left:1037px;top:108px;width:14px;height:1px;background:#b07f66;opacity:.6"></div>
<div class="abs" style="left:1051px;top:108px;width:4px;height:1px;background:#4f86b6;opacity:.6"></div>
<div class="abs" style="left:1016px;top:110px;width:26px;height:1px;background:#a8a8a8;opacity:.6"></div>
<div class="abs" style="left:1043px;top:110px;width:27px;height:1px;background:#a8a8a8;opacity:.6"></div>
<div class="abs" style="left:1016px;top:112px;width:4px;height:1px;background:#4f86b6;opacity:.6"></div>
<div class="abs" style="left:1014px;top:114px;width:6px;height:1px;background:#4f86b6;opacity:.6"></div>
<div class="abs" style="left:1012px;top:116px;width:6px;height:1px;background:#4f86b6;opacity:.6"></div>
<div class="abs" style="left:1012px;top:118px;width:4px;height:1px;background:#4f86b6;opacity:.6"></div>
<div class="abs" style="left:1017px;top:118px;width:6px;height:1px;background:#86b8d0;opacity:.6"></div>
<div class="abs" style="left:1023px;top:118px;width:6px;height:1px;background:#b07f66;opacity:.6"></div>
<div class="abs" style="left:1029px;top:118px;width:1px;height:1px;background:#4f86b6;opacity:.6"></div>
<div class="abs" style="left:1014px;top:120px;width:5px;height:1px;background:#4f86b6;opacity:.6"></div>
<div class="abs" style="left:1016px;top:122px;width:2px;height:1px;background:#4f86b6;opacity:.6"></div>
<div class="abs" style="left:1019px;top:122px;width:6px;height:1px;background:#86b8d0;opacity:.6"></div>
<div class="abs" style="left:1025px;top:122px;width:16px;height:1px;background:#b07f66;opacity:.6"></div>
<div class="abs" style="left:1041px;top:122px;width:1px;height:1px;background:#4f86b6;opacity:.6"></div>
<div class="abs" style="left:1042px;top:122px;width:11px;height:1px;background:#a8a8a8;opacity:.6"></div>
<div class="abs" style="left:1053px;top:122px;width:4px;height:1px;background:#4f86b6;opacity:.6"></div>
<div class="abs" style="left:1014px;top:124px;width:6px;height:1px;background:#4f86b6;opacity:.6"></div>
<div class="abs" style="left:1012px;top:126px;width:6px;height:1px;background:#4f86b6;opacity:.6"></div>
<div class="abs" style="left:1010px;top:128px;width:6px;height:1px;background:#4f86b6;opacity:.6"></div>
<div class="abs" style="left:1008px;top:130px;width:11px;height:1px;background:#4f86b6;opacity:.6"></div>
<div class="abs" style="left:1008px;top:134px;width:7px;height:1px;background:#4f86b6;opacity:.6"></div>
<div class="abs" style="left:1016px;top:134px;width:9px;height:1px;background:#86b8d0;opacity:.6"></div>
<div class="abs" style="left:1026px;top:134px;width:5px;height:1px;background:#86b8d0;opacity:.6"></div>
<div class="abs" style="left:1032px;top:134px;width:5px;height:1px;background:#86b8d0;opacity:.6"></div>
<div class="abs" style="left:1037px;top:134px;width:10px;height:1px;background:#b07f66;opacity:.6"></div>
<div class="abs" style="left:1047px;top:134px;width:10px;height:1px;background:#4f86b6;opacity:.6"></div>
<div class="abs" style="left:1071px;top:69px;width:14px;height:618px;background:#1f1f1f;border-left:1px solid #121212"></div>
<div class="abs" style="left:1072px;top:247px;width:13px;height:276px;background:#333333"></div>
<div class="abs" style="left:1072px;top:314px;width:13px;height:2px;background:#8e8e8e"></div>
<div class="abs" style="left:378px;top:675px;width:552px;height:12px;background:#303030"></div>
<div class="abs" style="left:1086px;top:12px;width:140px;height:35px;background:#1f1f1f;border-top:1px solid #2b2b2b;border-right:1px solid #2b2b2b"></div>
<svg class="abs" style="left:1095px;top:22px" width="16" height="16" viewBox="0 0 24 24"><path d="M1.800 3.700 12 21.300 22.200 3.700h-4.100L12 14.300 5.800 3.700z" fill="#41b883"/><path d="M5.800 3.700 12 14.300l6.100-10.600h-3.700L12 7.800 9.600 3.700z" fill="#35495e"/></svg>
<div class="t" style="left:1117px;top:19px;color:#f88070;letter-spacing:-.15px">index.vue</div>
<div class="t" style="left:1176px;top:19px;color:#f88070;font-size:12px;opacity:.8">2, U</div>
<svg class="abs" style="left:1203px;top:22px" width="16" height="16" viewBox="0 0 16 16"><path d="M4 4l8 8M12 4l-8 8" stroke="#9a9a9a" stroke-width="1.100" fill="none"/></svg>
<div class="bc" style="left:1101px;">src</div>
<svg class="abs" style="left:1117.8px;top:50px" width="16" height="16" viewBox="0 0 16 16"><path d="M5.700 3.300 10.400 8l-4.700 4.700" fill="none" stroke="#a9a9a9" stroke-width="1.100"/></svg>
<div class="bc" style="left:1133.5px;">pages</div>
<svg class="abs" style="left:1167px;top:50px" width="16" height="16" viewBox="0 0 16 16"><path d="M5.700 3.300 10.400 8l-4.700 4.700" fill="none" stroke="#a9a9a9" stroke-width="1.100"/></svg>
<div class="bc" style="left:1183.7px;">my</div>
<svg class="abs" style="left:1200.5px;top:50px" width="16" height="16" viewBox="0 0 16 16"><path d="M5.700 3.300 10.400 8l-4.700 4.700" fill="none" stroke="#a9a9a9" stroke-width="1.100"/></svg>
<svg class="abs" style="left:1217px;top:50px" width="16" height="16" viewBox="0 0 24 24"><path d="M1.800 3.700 12 21.300 22.200 3.700h-4.100L12 14.300 5.800 3.700z" fill="#41b883"/><path d="M5.800 3.700 12 14.300l6.100-10.600h-3.700L12 7.800 9.600 3.700z" fill="#35495e"/></svg>
<div class="bc" style="left:1238.7px;">index.vue</div>
<svg class="abs" style="left:1293.5px;top:50px" width="16" height="16" viewBox="0 0 16 16"><path d="M5.700 3.300 10.400 8l-4.700 4.700" fill="none" stroke="#a9a9a9" stroke-width="1.100"/></svg>
<div class="bc" style="left:1309px;">Vetur</div>
<svg class="abs" style="left:1340px;top:50px" width="16" height="16" viewBox="0 0 16 16"><path d="M5.700 3.300 10.400 8l-4.700 4.700" fill="none" stroke="#a9a9a9" stroke-width="1.100"/></svg>
<div class="bc" style="left:1356.5px;letter-spacing:2px;color:#cccccc">{}</div>
<div class="bc" style="left:1374px;">&quot;index.vue&quot;</div>
<svg class="abs" style="left:1438.6px;top:50px" width="16" height="16" viewBox="0 0 16 16"><path d="M5.700 3.300 10.400 8l-4.700 4.700" fill="none" stroke="#a9a9a9" stroke-width="1.100"/></svg>
<svg class="abs" style="left:1454.5px;top:50px" width="16" height="16" viewBox="0 0 16 16" fill="none" stroke="#75beff" stroke-width="1.100" stroke-linejoin="round"><path d="M8 1.800 14 4.500v6.600L8 14.200 2 11.100V4.500zM2 4.500l6 2.900 6-2.900M8 7.400v6.800"/></svg>
<div class="bc" style="left:1474px;">template</div>
<svg class="abs" style="left:1525px;top:50px" width="16" height="16" viewBox="0 0 16 16"><path d="M5.700 3.300 10.400 8l-4.700 4.700" fill="none" stroke="#a9a9a9" stroke-width="1.100"/></svg>
<svg class="abs" style="left:1540.5px;top:50px" width="16" height="16" viewBox="0 0 16 16" fill="none" stroke="#75beff" stroke-width="1.100" stroke-linejoin="round"><path d="M8 1.800 14 4.500v6.600L8 14.200 2 11.100V4.500zM2 4.500l6 2.900 6-2.900M8 7.400v6.800"/></svg>
<div class="bc" style="left:1559.2px;">div.mx-3.mt-4.h-30.bg-white.rounded-2.p-3.5.box-border</div>
<div class="abs" style="left:1086px;top:165px;width:626px;height:522px;overflow:hidden"><div class="abs" style="left:-1086px;top:-165px;width:1712px;height:822px">
<div class="abs" style="left:1165px;top:297px;width:547px;height:24px;background:#232e3a"></div>
<div class="abs" style="left:1165px;top:393px;width:547px;height:24px;border-top:2px solid #292929;border-bottom:2px solid #292929"></div>
<div class="guide" style="left:1165px;top:153px;height:264px;background:#707070"></div>
<div class="guide" style="left:1185px;top:153px;height:48px;background:#404040"></div>
<div class="guide" style="left:1204px;top:153px;height:24px;background:#404040"></div>
<div class="guide" style="left:1185px;top:297px;height:96px;background:#404040"></div>
<div class="ln" style="left:1078px;top:153px">77</div>
<div class="code" style="left:1224.4px;top:153px"><span class="b">&lt;/</span><span class="tg">div</span><span class="b">&gt;</span></div>
<div class="ln" style="left:1078px;top:177px">78</div>
<div class="code" style="left:1204.6px;top:177px"><span class="b">&lt;/</span><span class="tg">div</span><span class="b">&gt;</span></div>
<div class="ln" style="left:1078px;top:201px">79</div>
<div class="code" style="left:1184.8px;top:201px"><span class="b">&lt;/</span><span class="tg">div</span><span class="b">&gt;</span></div>
<div class="ln" style="left:1078px;top:225px">80</div>
<div class="code" style="left:1165.0px;top:225px"></div>
<div class="ln" style="left:1078px;top:249px">81</div>
<div class="code" style="left:1184.8px;top:249px"><span class="b">&lt;</span><span class="tg">div</span> <span class="at">class</span><span class="w">=</span><span class="s">&quot;mx-3 mt-4 h-30 bg-white rounded-2 p-3.5</span></div>
<div class="ln" style="left:1078px;top:273px"></div>
<div class="code" style="left:1184.8px;top:273px"><span class="s">box-border&quot;</span><span class="b">&gt;</span></div>
<div class="ln" style="left:1078px;top:297px">82</div>
<div class="code" style="left:1204.6px;top:297px"><span class="b">&lt;</span><span class="tg">div</span> <span class="at">class</span><span class="w">=</span><span class="s">&quot;flex items-center justify-between&quot;</span><span class="b">&gt;</span><span style="color:#8a8a8a;margin-left:3px">&#x22EF;</span></div>
<div class="ln" style="left:1078px;top:321px">84</div>
<div class="code" style="left:1204.6px;top:321px"><span class="b">&lt;/</span><span class="tg">div</span><span class="b">&gt;</span></div>
<div class="ln" style="left:1078px;top:345px">85</div>
<div class="code" style="left:1165.0px;top:345px"></div>
<div class="ln" style="left:1078px;top:369px">86</div>
<div class="code" style="left:1204.6px;top:369px"><span class="b">&lt;</span><span class="tg">ShopCard</span> <span class="k">v-for</span><span class="w">=</span><span class="w">&quot;</span><span class="at">o</span> <span class="tg">in</span> <span class="n">5</span><span class="w">&quot;</span> <span class="w">:</span><span class="at">key</span><span class="w">=</span><span class="w">&quot;</span><span class="at">o</span><span class="w">&quot;</span> <span class="b">/&gt;</span></div>
<div class="ln act" style="left:1078px;top:393px">87</div>
<div class="code" style="left:1184.8px;top:393px"><span class="b">&lt;/</span><span class="tg">div</span><span class="b">&gt;</span></div>
<div class="ln" style="left:1078px;top:417px">88</div>
<div class="code" style="left:1165.0px;top:417px"><span class="b">&lt;/</span><span class="tg">template</span><span class="b">&gt;</span></div>
<div class="ln" style="left:1078px;top:441px">89</div>
<div class="code" style="left:1165.0px;top:441px"></div>
<div class="ln" style="left:1078px;top:465px">90</div>
<div class="code" style="left:1165.0px;top:465px"><span class="b">&lt;</span><span class="tg">script</span> <span class="at">lang</span><span class="w">=</span><span class="s">&quot;ts&quot;</span> <span class="at">setup</span><span class="b">&gt;</span></div>
<div class="ln" style="left:1078px;top:489px">91</div>
<div class="code" style="left:1165.0px;top:489px"><span class="k">import</span> <span class="at sq">ShopCard</span> <span class="k">from</span> <span class="s sq">'./components/ShopCard.vue'</span></div>
<div class="ln" style="left:1078px;top:513px">92</div>
<div class="code" style="left:1165.0px;top:513px"></div>
<div class="ln" style="left:1078px;top:537px">93</div>
<div class="code" style="left:1165.0px;top:537px"><span class="at">console</span><span class="w">.</span><span class="f">log</span><span class="y">(</span><span class="s">&#x27;ShopCard&#x27;</span><span class="w">,</span> <span class="at">ShopCard</span><span class="y">)</span></div>
<div class="ln" style="left:1078px;top:561px">94</div>
<div class="code" style="left:1165.0px;top:561px"><span class="b">&lt;/</span><span class="tg">script</span><span class="b">&gt;</span></div>
<div class="ln" style="left:1078px;top:585px">95</div>
<div class="code" style="left:1165.0px;top:585px"></div>
<svg class="abs" style="left:1146px;top:301px" width="16" height="16" viewBox="0 0 16 16"><path d="M5.600 3.200 10.400 8l-4.800 4.800" fill="none" stroke="#c5c5c5" stroke-width="1.100"/></svg>
</div></div>
<div class="abs" style="left:1087px;top:69px;width:625px;height:96px;background:#1f1f1f;box-shadow:0 1px 1px #000000d8,0 2px 2px #00000050"></div>
<div class="abs" style="left:1087px;top:69px;width:625px;height:96px;overflow:hidden">
<div class="ln" style="left:-9px;top:0px">1</div>
<div class="code" style="left:78.0px;top:0px"><span class="b">&lt;</span><span class="tg">route</span> <span class="at">lang</span><span class="w">=</span><span class="s">&quot;json5&quot;</span><span class="b">&gt;</span></div>
<div class="ln" style="left:-9px;top:24px">11</div>
<div class="code" style="left:78.0px;top:24px"><span class="b">&lt;</span><span class="tg">template</span><span class="b">&gt;</span></div>
<div class="ln" style="left:-9px;top:48px">51</div>
<div class="code" style="left:97.8px;top:48px"><span class="b">&lt;</span><span class="tg">div</span> <span class="at">class</span><span class="w">=</span><span class="s">&quot;mx-3 mt-7.5 h-30 bg-white rounded-2 p-3.5 box-border&quot;</span><span class="b">&gt;</span></div>
<div class="ln" style="left:-9px;top:72px">57</div>
<div class="code" style="left:117.6px;top:72px"><span class="b">&lt;</span><span class="tg">div</span> <span class="at">class</span><span class="w">=</span><span class="s">&quot;flex justify-center text-3 mt-2&quot;</span><span class="b">&gt;</span></div>
</div>
<div class="abs" style="left:298px;top:687px;width:1414px;height:135px;background:#181818;border-top:1px solid #2b2b2b"></div>
<div class="ptab" style="left:318px;color:#9d9d9d">问题</div>
<div class="ptab" style="left:390px;color:#9d9d9d">输出</div>
<div class="ptab" style="left:436px;color:#9d9d9d">调试控制台</div>
<div class="ptab" style="left:515px;color:#e7e7e7">终端</div>
<div class="ptab" style="left:561px;color:#9d9d9d">端口</div>
<div class="ptab" style="left:607px;color:#9d9d9d;letter-spacing:-.8px">GITLENS</div>
<div class="abs" style="left:513px;top:716px;width:26px;height:1px;background:#0078d4"></div>
<div class="abs" style="left:350px;top:697px;width:18px;height:18px;border-radius:9px;background:#616161;color:#f8f8f8;font-size:11px;line-height:18px;text-align:center">2</div>
<div class="term" style="left:318px;top:730px"><span style="color:#cf55cf">[plugin:uni:mp-using-component]</span> <span style="color:#f14c4c">Unexpected token S in JSON at position 208</span></div>
<div class="term" style="left:318px;top:747px">at <span style="color:#29b8db">pages/my/index.vue:1:0</span> <span style="color:#f5f543">(x6)</span></div>
<div class="abs" style="left:318px;top:764px;width:7px;height:17px;border:1px solid #cccccc"></div>
<svg class="abs" style="left:1644px;top:698px" width="16" height="16" viewBox="0 0 16 16"><path d="M8 1.500v13M1.500 8h13" stroke="#cccccc" stroke-width="1.100" fill="none"/></svg>
<svg class="abs" style="left:1663px;top:701px" width="11" height="11" viewBox="0 0 16 16"><path d="M3 5.500 8 10.500l5-5" stroke="#cccccc" stroke-width="1.500" fill="none"/></svg>
<svg class="abs" style="left:1684px;top:698px" width="16" height="16" viewBox="0 0 16 16" fill="none" stroke="#cccccc" stroke-width="1.100"><rect x="1.500" y="1.500" width="13" height="13" rx="1"/><path d="M4.500 5.500 7.500 8l-3 2.500M8.500 11h3.500"/></svg>
<div class="t" style="left:1704px;top:695px;font-size:12px;color:#cccccc">bash</div>
<svg class="abs" style="left:0;top:0" width="1712" height="822" viewBox="0 0 1712 822">
<g stroke="#ed1c24" stroke-width="3.600" fill="none" stroke-linecap="butt">
<path d="M210.600 506.600 395.500 59.500"/>
<path d="M1114.600 507 274 510.600"/>
<path d="M1113.300 531.300 630 718"/>
</g>
<rect x="1139.300" y="483.300" width="543" height="41.800" fill="none" stroke="#ed1c24" stroke-width="4.200" stroke-linejoin="round"/>
<g fill="#ed1c24">
<path d="M400 48.500 389 59 399.500 63z"/>
<path d="M261.600 511 276 504.400 276 517z"/>
<path d="M617.200 723 629.400 711.800 633.500 723.800z"/>
</g>
</svg>
</body></html>
